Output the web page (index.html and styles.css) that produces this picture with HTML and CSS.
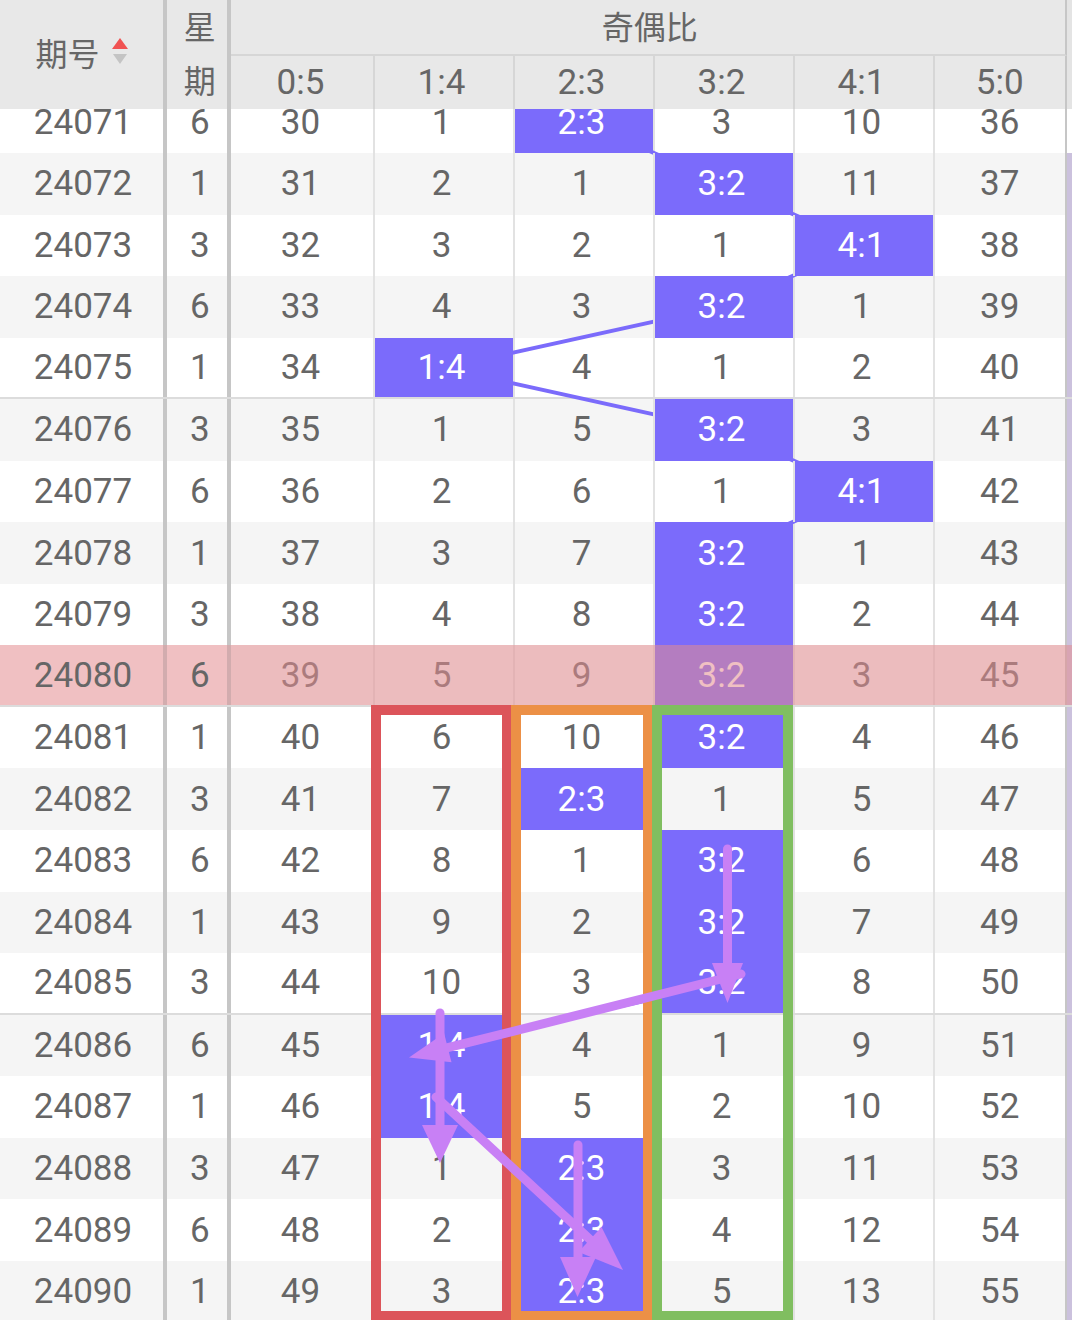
FILE: index.html
```html
<!DOCTYPE html>
<html lang="zh-CN">
<head>
<meta charset="utf-8">
<title>奇偶比走势</title>
<link rel="stylesheet" href="styles.css">
</head>
<body>
<div class="page">
  <div class="head">
    <div class="h-id"><span>期号</span>
      <svg class="sort" width="16" height="28" viewBox="0 0 16 28"><polygon points="8,0 16,11 0,11" fill="#f05252"/><polygon points="1,16 15,16 8,26" fill="#c4c4c4"/></svg>
    </div>
    <div class="h-wk"><span>星</span><span>期</span></div>
    <div class="h-title">奇偶比</div>
    <div class="h-bar"></div>
    <div class="h-r first">0:5</div>
    <div class="h-r">1:4</div>
    <div class="h-r">2:3</div>
    <div class="h-r">3:2</div>
    <div class="h-r">4:1</div>
    <div class="h-r last">5:0</div>
  </div>

  <div class="tbody">
    <svg class="links" width="1072" height="1232" viewBox="0 0 1072 1232">
      <polyline fill="none" stroke="#7b6bfb" stroke-width="4" points="583,30.78 723,92.34 863,153.9 723,215.46 443,277.02 723,338.58 863,400.14 723,461.7 723,523.26 723,584.82 723,646.38 583,707.94 723,769.5 723,831.06 723,892.62 443,954.18 443,1015.74 583,1077.3 583,1138.86 583,1200.42"/>
    </svg>

    <div class="row"><div class="c id">24071</div><div class="c wk">6</div><div class="c r">30</div><div class="c r">1</div><div class="c r hit">2:3</div><div class="c r">3</div><div class="c r">10</div><div class="c r last">36</div><div class="bar"></div></div>
    <div class="row"><div class="c id">24072</div><div class="c wk">1</div><div class="c r">31</div><div class="c r">2</div><div class="c r">1</div><div class="c r hit">3:2</div><div class="c r">11</div><div class="c r last">37</div><div class="bar"></div></div>
    <div class="row"><div class="c id">24073</div><div class="c wk">3</div><div class="c r">32</div><div class="c r">3</div><div class="c r">2</div><div class="c r">1</div><div class="c r hit">4:1</div><div class="c r last">38</div><div class="bar"></div></div>
    <div class="row"><div class="c id">24074</div><div class="c wk">6</div><div class="c r">33</div><div class="c r">4</div><div class="c r">3</div><div class="c r hit">3:2</div><div class="c r">1</div><div class="c r last">39</div><div class="bar"></div></div>
    <div class="row sep"><div class="c id">24075</div><div class="c wk">1</div><div class="c r">34</div><div class="c r hit">1:4</div><div class="c r">4</div><div class="c r">1</div><div class="c r">2</div><div class="c r last">40</div><div class="bar"></div></div>
    <div class="row"><div class="c id">24076</div><div class="c wk">3</div><div class="c r">35</div><div class="c r">1</div><div class="c r">5</div><div class="c r hit">3:2</div><div class="c r">3</div><div class="c r last">41</div><div class="bar"></div></div>
    <div class="row"><div class="c id">24077</div><div class="c wk">6</div><div class="c r">36</div><div class="c r">2</div><div class="c r">6</div><div class="c r">1</div><div class="c r hit">4:1</div><div class="c r last">42</div><div class="bar"></div></div>
    <div class="row"><div class="c id">24078</div><div class="c wk">1</div><div class="c r">37</div><div class="c r">3</div><div class="c r">7</div><div class="c r hit">3:2</div><div class="c r">1</div><div class="c r last">43</div><div class="bar"></div></div>
    <div class="row"><div class="c id">24079</div><div class="c wk">3</div><div class="c r">38</div><div class="c r">4</div><div class="c r">8</div><div class="c r hit">3:2</div><div class="c r">2</div><div class="c r last">44</div><div class="bar"></div></div>
    <div class="row sep hl"><div class="c id">24080</div><div class="c wk">6</div><div class="c r">39</div><div class="c r">5</div><div class="c r">9</div><div class="c r hit">3:2</div><div class="c r">3</div><div class="c r last">45</div><div class="bar"></div></div>
    <div class="row"><div class="c id">24081</div><div class="c wk">1</div><div class="c r">40</div><div class="c r">6</div><div class="c r">10</div><div class="c r hit">3:2</div><div class="c r">4</div><div class="c r last">46</div><div class="bar"></div></div>
    <div class="row"><div class="c id">24082</div><div class="c wk">3</div><div class="c r">41</div><div class="c r">7</div><div class="c r hit">2:3</div><div class="c r">1</div><div class="c r">5</div><div class="c r last">47</div><div class="bar"></div></div>
    <div class="row"><div class="c id">24083</div><div class="c wk">6</div><div class="c r">42</div><div class="c r">8</div><div class="c r">1</div><div class="c r hit">3:2</div><div class="c r">6</div><div class="c r last">48</div><div class="bar"></div></div>
    <div class="row"><div class="c id">24084</div><div class="c wk">1</div><div class="c r">43</div><div class="c r">9</div><div class="c r">2</div><div class="c r hit">3:2</div><div class="c r">7</div><div class="c r last">49</div><div class="bar"></div></div>
    <div class="row sep"><div class="c id">24085</div><div class="c wk">3</div><div class="c r">44</div><div class="c r">10</div><div class="c r">3</div><div class="c r hit">3:2</div><div class="c r">8</div><div class="c r last">50</div><div class="bar"></div></div>
    <div class="row"><div class="c id">24086</div><div class="c wk">6</div><div class="c r">45</div><div class="c r hit">1:4</div><div class="c r">4</div><div class="c r">1</div><div class="c r">9</div><div class="c r last">51</div><div class="bar"></div></div>
    <div class="row"><div class="c id">24087</div><div class="c wk">1</div><div class="c r">46</div><div class="c r hit">1:4</div><div class="c r">5</div><div class="c r">2</div><div class="c r">10</div><div class="c r last">52</div><div class="bar"></div></div>
    <div class="row"><div class="c id">24088</div><div class="c wk">3</div><div class="c r">47</div><div class="c r">1</div><div class="c r hit">2:3</div><div class="c r">3</div><div class="c r">11</div><div class="c r last">53</div><div class="bar"></div></div>
    <div class="row"><div class="c id">24089</div><div class="c wk">6</div><div class="c r">48</div><div class="c r">2</div><div class="c r hit">2:3</div><div class="c r">4</div><div class="c r">12</div><div class="c r last">54</div><div class="bar"></div></div>
    <div class="row"><div class="c id">24090</div><div class="c wk">1</div><div class="c r">49</div><div class="c r">3</div><div class="c r hit">2:3</div><div class="c r">5</div><div class="c r">13</div><div class="c r last">55</div><div class="bar"></div></div>
  </div>

  <svg class="notes" width="1072" height="1320" viewBox="0 0 1072 1320">
    <rect x="376" y="710" width="131" height="606" fill="none" stroke="#dc545a" stroke-width="10"/>
    <rect x="516" y="710" width="132" height="606" fill="none" stroke="#ec9046" stroke-width="10"/>
    <rect x="657" y="710" width="131" height="606" fill="none" stroke="#80be60" stroke-width="10"/>
    <g stroke="#c880f5" stroke-width="9" stroke-linecap="round" fill="none">
      <line x1="727.5" y1="849" x2="727.5" y2="966"/>
      <line x1="741" y1="974" x2="447.8" y2="1047.7"/>
      <line x1="440" y1="1013" x2="440" y2="1128"/>
      <line x1="436" y1="1097" x2="590" y2="1239.5"/>
      <line x1="578" y1="1145" x2="578" y2="1260"/>
    </g>
    <g fill="#c880f5">
      <polygon points="712,963 743,963 727.5,1003"/>
      <polygon points="409,1057.5 451.5,1062.3 444.1,1033.2"/>
      <polygon points="422,1125 458,1125 440,1163"/>
      <polygon points="623,1270 578.5,1252 601.5,1227"/>
      <polygon points="560,1257 596,1257 577.5,1297"/>
    </g>
  </svg>
</div>
</body>
</html>
```
FILE: styles.css
```css
html, body {
  margin: 0;
  padding: 0;
  overflow: hidden;
  background: #ffffff;
}

body {
  width: 1072px;
  height: 1320px;
  font-family: Roboto, "Noto Sans CJK SC", sans-serif;
  color: #666666;
}

.page {
  position: relative;
  width: 1072px;
  height: 1320px;
  overflow: hidden;
}

/* ---------- header ---------- */
.head {
  position: relative;
  z-index: 10;
  display: grid;
  grid-template-columns: 167px 63.5px 142px 140px 140px 140px 140px 134.5px 5px;
  grid-template-rows: 56px 53px;
  background: #e8e8e8;
}

.head > div {
  box-sizing: border-box;
}

.h-id {
  grid-row: 1 / 3;
  grid-column: 1;
  border-right: 4px solid #c6c6c6;
  display: flex;
  align-items: center;
  justify-content: center;
  gap: 12px;
  font-size: 32px;
  padding-bottom: 5px;
}

.sort {
  display: block;
  margin-top: 0;
}

.h-wk {
  grid-row: 1 / 3;
  grid-column: 2;
  border-right: 4px solid #c6c6c6;
  display: flex;
  flex-direction: column;
  align-items: center;
  font-size: 32px;
  padding-left: 6px;
}

.h-wk span {
  display: flex;
  align-items: center;
  justify-content: center;
}

.h-wk span:first-child {
  height: 50px;
}

.h-wk span:last-child {
  height: 57px;
}

.h-title {
  grid-row: 1;
  grid-column: 3 / 9;
  border-bottom: 2px solid #d6d6d6;
  border-right: 2px solid #c6c6c6;
  display: flex;
  align-items: center;
  justify-content: center;
  font-size: 32px;
  padding-bottom: 5px;
  padding-left: 4px;
}

.h-bar {
  grid-row: 1 / 3;
  grid-column: 9;
  background: #e4e4e4;
}

.h-r {
  grid-row: 2;
  display: flex;
  align-items: center;
  justify-content: center;
  font-size: 35px;
  border-left: 2px solid #d6d6d6;
  padding-right: 4px;
}

.h-r.first {
  grid-column: 3;
  border-left: none;
  padding-right: 2px;
}

.h-r.last {
  border-right: 2px solid #c6c6c6;
  padding-right: 0;
}

/* ---------- body ---------- */
.tbody {
  position: relative;
  z-index: 0;
  margin-top: -17.56px;
}

.links {
  position: absolute;
  left: 0;
  top: 0;
  z-index: 1;
}

.row {
  display: grid;
  grid-template-columns: 167px 63.5px 142px 140px 140px 140px 140px 134.5px 5px;
  height: 61.56px;
  box-sizing: border-box;
  background: #ffffff;
}

.row:nth-of-type(even) {
  background: #f5f5f5;
}

.row.sep {
  border-bottom: 2px solid #dcdcdc;
}

.c {
  display: flex;
  align-items: center;
  justify-content: center;
  font-size: 35px;
  box-sizing: border-box;
}

.id {
  border-right: 4px solid #c6c6c6;
  padding-left: 3px;
}

.wk {
  border-right: 4px solid #c6c6c6;
  padding-left: 6px;
}

.r {
  padding-right: 2px;
}

.r + .r {
  border-left: 2px solid #e2e2e2;
  padding-right: 4px;
}

.r.last {
  border-right: 2px solid #c6c6c6;
  padding-right: 0;
}

.hit {
  position: relative;
  z-index: 2;
  background: #7b6bfb;
  color: #ffffff;
}

.bar {
  background: #cbc1dd;
}

.row:first-of-type .bar {
  background: #ffffff;
}

/* highlighted row */
.hl {
  position: relative;
}

.hl .id,
.hl .wk {
  background: #f0c0c2;
  border-right-color: #d2acae;
}

.hl::after {
  content: "";
  position: absolute;
  left: 230.5px;
  right: 0;
  top: 0;
  bottom: 0;
  background: rgba(228, 140, 143, 0.55);
  z-index: 3;
}

/* ---------- annotations ---------- */
.notes {
  position: absolute;
  left: 0;
  top: 0;
  z-index: 20;
  pointer-events: none;
}
```
